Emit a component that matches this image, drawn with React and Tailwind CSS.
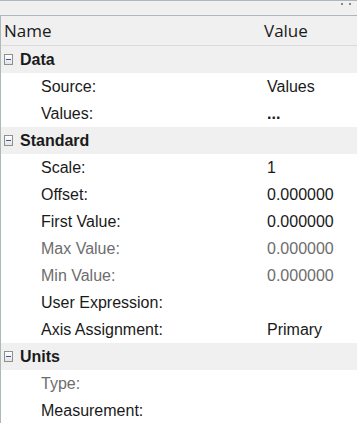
import React from "react";

const sections = [
    {
        title: "Data",
        rows: [
            { name: "Source:", value: "Values" },
            { name: "Values:", value: "...", bold: true },
        ],
    },
    {
        title: "Standard",
        rows: [
            { name: "Scale:", value: "1" },
            { name: "Offset:", value: "0.000000" },
            { name: "First Value:", value: "0.000000" },
            { name: "Max Value:", value: "0.000000", muted: true },
            { name: "Min Value:", value: "0.000000", muted: true },
            { name: "User Expression:", value: "" },
            { name: "Axis Assignment:", value: "Primary" },
        ],
    },
    {
        title: "Units",
        rows: [
            { name: "Type:", value: "", muted: true },
            { name: "Measurement:", value: "" },
        ],
    },
];

const MinusBox = () => (
    <span className="w-[9px] h-[11px] border border-[#8e8f8f] bg-gradient-to-b from-white to-[#e4e4e4] flex items-center justify-center shrink-0">
        <span className="w-[5px] h-px bg-[#3d57a6]" />
    </span>
);

const GroupRow = ({ title }) => (
    <div className="h-[27px] bg-[#f0f0f0] flex items-center pl-[3px] gap-[7px]">
        <MinusBox />
        <span className="font-bold text-[16px] text-[#1a1a1a] leading-[27px]">{title}</span>
    </div>
);

const PropRow = ({ name, value, muted, bold }) => (
    <div className={`h-[27px] bg-white flex items-center text-[16px] leading-[27px] ${muted ? "text-[#6d6d6d]" : "text-[#1a1a1a]"}`}>
        <span className="w-[266px] pl-[40px] shrink-0">{name}</span>
        <span className={bold ? "font-bold" : ""}>{value}</span>
    </div>
);

export default function App() {
    return (
        <div className="w-[357px] h-[423px] overflow-hidden bg-[#f0f0f0] flex flex-col" style={{ fontFamily: '"Liberation Sans", Arial, sans-serif' }}>
            <div className="h-[16px] shrink-0 border-t border-b border-[#aeb6be] flex justify-end items-start pt-[2px] pr-[6px] gap-[6px]">
                <span className="w-[2px] h-[2px] bg-[#7f8790]" />
                <span className="w-[2px] h-[2px] bg-[#7f8790]" />
            </div>
            <div className="flex-1 border-l border-[#aeb6be] flex flex-col">
                <div className="h-[30px] shrink-0 border-b border-[#dadada] flex items-center text-[17px] text-[#1a1a1a]" style={{ fontFamily: '"Open Sans", "Noto Sans", sans-serif' }}>
                    <span className="w-[263px] pl-[3px] shrink-0">Name</span>
                    <span>Value</span>
                </div>
                {sections.map((s) => (
                    <div key={s.title} className="flex flex-col">
                        <GroupRow title={s.title} />
                        {s.rows.map((r) => (
                            <PropRow key={r.name} {...r} />
                        ))}
                    </div>
                ))}
            </div>
        </div>
    );
}
